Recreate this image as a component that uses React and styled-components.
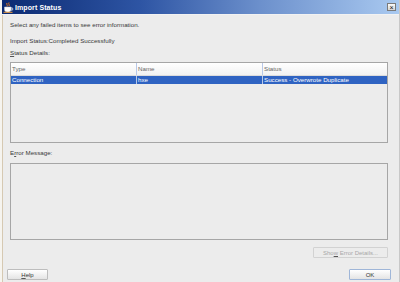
import styled, { createGlobalStyle } from "styled-components";

const GlobalStyle = createGlobalStyle`
  html, body {
    margin: 0;
    padding: 0;
    background: #ececec;
  }
  body {
    font-family: "Liberation Sans", Arial, sans-serif;
    overflow: hidden;
  }
`;

const Window = styled.div`
  width: 400px;
  height: 282px;
  box-sizing: border-box;
  display: flex;
  flex-direction: column;
  background: #ececec;
  border-left: 2px solid #f6f4ef;
  border-right: 1px solid #c8c8c8;
  overflow: hidden;
`;

const TitleBar = styled.div`
  height: 14px;
  flex: none;
  display: flex;
  align-items: center;
  gap: 1px;
  padding: 0 3px 0 1px;
  background: linear-gradient(to right, #0b2a72 0%, #2e55a4 35%, #6c90cc 65%, #a9c9f0 100%);
  border-bottom: 1px solid #f2f2f2;
`;

const TitleText = styled.span`
  color: #fff;
  font-weight: bold;
  font-size: 7px;
  letter-spacing: 0.1px;
`;

const CloseButton = styled.div`
  margin-left: auto;
  width: 9px;
  height: 8px;
  box-sizing: border-box;
  border: 1px solid #7a7a7a;
  background: linear-gradient(#fafafa, #d6d6d6);
  display: flex;
  align-items: center;
  justify-content: center;
  font-size: 7px;
  line-height: 1;
  color: #111;
`;

const Body = styled.div`
  flex: 1;
  display: flex;
  flex-direction: column;
  border-left: 1px solid #d6c9b2;
  padding: 0 11px 0 7px;
  color: #383838;
  font-size: 6.2px;
`;

const Line = styled.div`
  height: 8px;
  line-height: 8px;
  margin-top: ${(p) => p.$gap || 0}px;
  white-space: nowrap;
`;

const Key = styled.span`
  text-decoration: underline;
  text-decoration-color: #555;
  text-decoration-thickness: 1px;
`;

const Table = styled.div`
  margin-top: 5px;
  height: 81px;
  box-sizing: border-box;
  border: 1px solid #a6a6a6;
  display: flex;
  flex-direction: column;
`;

const Row = styled.div`
  display: grid;
  grid-template-columns: 125px 126px 1fr;
  height: ${(p) => (p.$head ? 12 : 8)}px;
  background: ${(p) =>
    p.$head ? "linear-gradient(#ffffff, #f2f2f2)" : p.$selected ? "#2f63c2" : "transparent"};
  color: ${(p) => (p.$head ? "#666" : p.$selected ? "#fff" : "#333")};
  border-bottom: ${(p) => (p.$head ? "1px solid #dcdcdc" : "none")};
`;

const Cell = styled.div`
  padding-left: 1px;
  line-height: ${(p) => (p.$head ? 12 : 8)}px;
  white-space: nowrap;
  overflow: hidden;
  & + & {
    border-left: 1px solid ${(p) => (p.$head ? "#c9c9c9" : "#b8c8e8")};
  }
`;

const MessageBox = styled.div`
  margin-top: 6px;
  height: 77px;
  box-sizing: border-box;
  border: 1px solid #a6a6a6;
  background: #ececec;
`;

const DetailsRow = styled.div`
  display: flex;
  justify-content: flex-end;
  margin-top: 7px;
`;

const Button = styled.div`
  width: ${(p) => p.$width}px;
  height: 11px;
  box-sizing: border-box;
  border: 1px solid ${(p) => (p.$default ? "#9fb6d8" : p.$disabled ? "#d2d2d2" : "#bdbdbd")};
  border-radius: 1px;
  background: ${(p) => (p.$disabled ? "#ececec" : "linear-gradient(#ffffff, #e4e4e4)")};
  color: ${(p) => (p.$disabled ? "#a8a8a8" : "#333")};
  display: flex;
  align-items: center;
  justify-content: center;
  font-size: 6px;
  white-space: nowrap;
`;

const Footer = styled.div`
  display: flex;
  justify-content: space-between;
  align-items: flex-end;
  margin: auto -3px 2px -3px;
`;

const CupIcon = () => (
  <svg width="11" height="11" viewBox="0 0 11 11">
    <path d="M4 1 C3 2.5 5 3 4 4.5 M6 0.5 C5 2 7 2.5 6 4" stroke="#e87a1a" strokeWidth="1" fill="none" />
    <path d="M1.5 5 H8 V7.5 C8 9 7 10 5.5 10 H4 C2.5 10 1.5 9 1.5 7.5 Z" fill="#fff" stroke="#c8c8c8" strokeWidth="0.5" />
    <path d="M8 6 H9.3 C10 6 10 8 9.3 8 H7.8" stroke="#fff" strokeWidth="0.8" fill="none" />
    <rect x="0.5" y="9.8" width="9" height="1" fill="#f0a040" />
  </svg>
);

const rows = [{ type: "Connection", name: "hxe", status: "Success - Overwrote Duplicate" }];

export default function App() {
  return (
    <>
      <GlobalStyle />
      <Window>
        <TitleBar>
          <CupIcon />
          <TitleText>Import Status</TitleText>
          <CloseButton>×</CloseButton>
        </TitleBar>
        <Body>
          <Line $gap={6}>Select any failed items to see error information.</Line>
          <Line $gap={8}>Import Status:Completed Successfully</Line>
          <Line $gap={4}>
            <Key>S</Key>tatus Details:
          </Line>
          <Table>
            <Row $head>
              <Cell $head>Type</Cell>
              <Cell $head>Name</Cell>
              <Cell $head>Status</Cell>
            </Row>
            {rows.map((r) => (
              <Row key={r.name} $selected>
                <Cell>{r.type}</Cell>
                <Cell>{r.name}</Cell>
                <Cell>{r.status}</Cell>
              </Row>
            ))}
          </Table>
          <Line $gap={6}>
            E<Key>r</Key>ror Message:
          </Line>
          <MessageBox />
          <DetailsRow>
            <Button $width={75} $disabled>
              Sho<Key>w</Key>&nbsp;Error Details...
            </Button>
          </DetailsRow>
          <Footer>
            <Button $width={41}>
              <Key>H</Key>elp
            </Button>
            <Button $width={42} $default>
              OK
            </Button>
          </Footer>
        </Body>
      </Window>
    </>
  );
}
